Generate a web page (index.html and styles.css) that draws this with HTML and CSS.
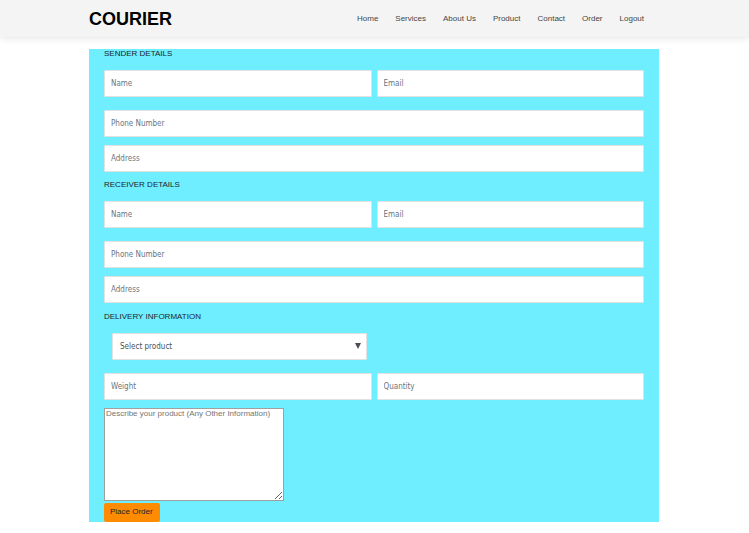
FILE: index.html
```html
<!DOCTYPE html>
<html lang="en">
<head>
<meta charset="utf-8">
<meta name="viewport" content="width=device-width, initial-scale=1">
<title>Courier</title>
<link rel="stylesheet" href="styles.css">
</head>
<body>
<header class="site-header">
  <div class="container header-inner">
    <a class="logo" href="#">COURIER</a>
    <nav class="nav">
      <a href="#">Home</a>
      <a href="#">Services</a>
      <a href="#">About Us</a>
      <a href="#">Product</a>
      <a href="#">Contact</a>
      <a href="#">Order</a>
      <a href="#">Logout</a>
    </nav>
  </div>
</header>
<main class="container">
  <form class="order-form">
    <section class="group">
      <h2>SENDER DETAILS</h2>
      <div class="pair">
        <input class="field" type="text" placeholder="Name" aria-label="Name">
        <input class="field" type="email" placeholder="Email" aria-label="Email">
      </div>
      <input class="field" type="tel" placeholder="Phone Number" aria-label="Phone Number">
      <input class="field" type="text" placeholder="Address" aria-label="Address">
    </section>
    <section class="group">
      <h2>RECEIVER DETAILS</h2>
      <div class="pair">
        <input class="field" type="text" placeholder="Name" aria-label="Name">
        <input class="field" type="email" placeholder="Email" aria-label="Email">
      </div>
      <input class="field" type="tel" placeholder="Phone Number" aria-label="Phone Number">
      <input class="field" type="text" placeholder="Address" aria-label="Address">
    </section>
    <section class="delivery">
      <h2>DELIVERY INFORMATION</h2>
      <div class="select-wrap">
        <select class="field product" aria-label="Select product">
          <option>Select product</option>
        </select>
        <svg class="arrow" viewBox="0 0 6 6" aria-hidden="true"><path d="M0 0H6L3 6Z"/></svg>
      </div>
      <div class="pair">
        <input class="field" type="text" placeholder="Weight" aria-label="Weight">
        <input class="field" type="text" placeholder="Quantity" aria-label="Quantity">
      </div>
      <textarea class="notes" placeholder="Describe your product (Any Other Information)" aria-label="Describe your product"></textarea>
      <button class="submit" type="submit">Place Order</button>
    </section>
  </form>
</main>
</body>
</html>
```
FILE: styles.css
```css
* {
  box-sizing: border-box;
}

body {
  margin: 0;
  background: #fff;
  color: #212529;
  font: 8px/9px "Liberation Sans", Arial, sans-serif;
}

.container {
  margin: 0 90px 0 89px;
}

.site-header {
  display: flow-root;
  background: #f4f4f4;
  box-shadow: 0 0 8px rgba(0, 0, 0, 0.15);
}

.header-inner {
  display: flex;
  align-items: center;
  justify-content: space-between;
  height: 37px;
  padding-right: 15px;
}

.logo {
  color: #000;
  font-size: 18px;
  line-height: 20px;
  font-weight: 700;
  text-decoration: none;
}

.nav {
  display: flex;
  gap: 17px;
}

.nav a {
  color: #444;
  text-decoration: none;
}

.order-form {
  margin-top: 12px;
  padding: 0 15px;
  background: #6eeeff;
}

.order-form h2 {
  margin: 0 0 12px;
  font: inherit;
}

.group {
  padding-bottom: 8px;
}

.delivery {
  padding-top: 1px;
}

.pair {
  display: grid;
  grid-template-columns: 1fr 1fr;
  gap: 5px;
}

.group .pair {
  margin-bottom: 13px;
}

.field {
  display: block;
  width: 100%;
  min-width: 0;
  height: 27px;
  margin: 0;
  padding: 0 6px 1px;
  border: 1px solid #e1e1e1;
  border-radius: 1px;
  background: #fff;
  color: #495057;
  font: 8px/12px "DejaVu Sans Condensed", Roboto, sans-serif;
}

.field + .field {
  margin-top: 8px;
}

.pair .field + .field {
  margin-top: 0;
}

.field::placeholder {
  color: #6c757d;
  opacity: 1;
}

.select-wrap {
  position: relative;
  width: 47%;
  min-width: 255px;
  margin: 0 8px 13px;
}

.product {
  padding: 0 7px;
  appearance: none;
}

.arrow {
  position: absolute;
  top: 10px;
  right: 6px;
  width: 6px;
  height: 6px;
  fill: #495057;
  pointer-events: none;
}

.notes {
  display: block;
  width: 180px;
  height: 93px;
  margin: 8px 0 2px;
  padding: 0 1px;
  border: 1px solid #a0a0a0;
  border-radius: 0;
  background: #fff;
  font: inherit;
  resize: both;
}

.notes::placeholder {
  color: #757575;
}

.submit {
  display: block;
  height: 19px;
  padding: 0 7px 2px 6px;
  border: 0;
  border-radius: 2px;
  background: #ff8c00;
  color: #212529;
  font: inherit;
}
```
